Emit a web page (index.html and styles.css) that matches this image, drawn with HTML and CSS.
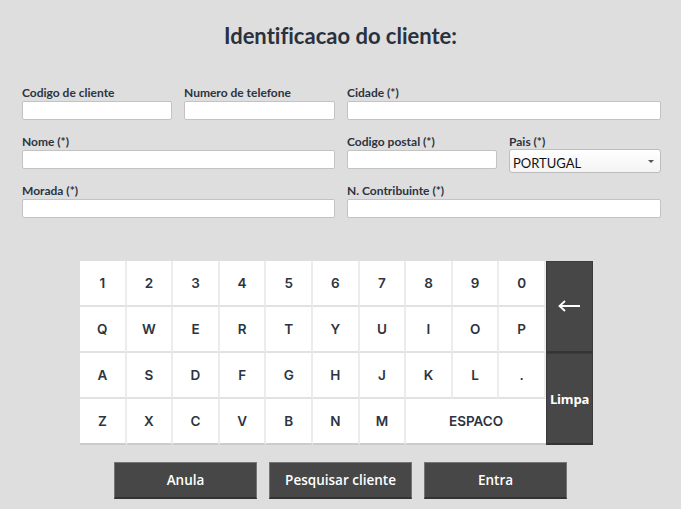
FILE: index.html
```html
<!DOCTYPE html>
<html lang="pt">
<head>
<meta charset="utf-8">
<title>Identificacao do cliente</title>
<link rel="stylesheet" href="styles.css">
</head>
<body>
<div class="page">
  <h1 class="title">Identificacao do cliente:</h1>
  <form class="form">
    <div class="field"><label>Codigo de cliente</label><input type="text"></div>
    <div class="field"><label>Numero de telefone</label><input type="text"></div>
    <div class="field span2"><label>Cidade (*)</label><input type="text"></div>

    <div class="field span2"><label>Nome (*)</label><input type="text"></div>
    <div class="field"><label>Codigo postal (*)</label><input type="text"></div>
    <div class="field"><label>Pais (*)</label>
      <div class="select"><span>PORTUGAL</span><span class="caret"></span></div>
    </div>

    <div class="field span2"><label>Morada (*)</label><input type="text"></div>
    <div class="field span2"><label>N. Contribuinte (*)</label><input type="text"></div>
  </form>

  <div class="keyboard">
    <div class="key">1</div><div class="key">2</div><div class="key">3</div><div class="key">4</div><div class="key">5</div>
    <div class="key">6</div><div class="key">7</div><div class="key">8</div><div class="key">9</div><div class="key">0</div>
    <div class="key dark back" aria-label="Apagar"><svg width="24" height="12" viewBox="0 0 24 12"><path d="M23 6H2.5M8 1L2.5 6L8 11" fill="none" stroke="#fff" stroke-width="1.8"/></svg></div>
    <div class="key">Q</div><div class="key">W</div><div class="key">E</div><div class="key">R</div><div class="key">T</div>
    <div class="key">Y</div><div class="key">U</div><div class="key">I</div><div class="key">O</div><div class="key">P</div>
    <div class="key">A</div><div class="key">S</div><div class="key">D</div><div class="key">F</div><div class="key">G</div>
    <div class="key">H</div><div class="key">J</div><div class="key">K</div><div class="key">L</div><div class="key">.</div>
    <div class="key dark clear">Limpa</div>
    <div class="key last">Z</div><div class="key last">X</div><div class="key last">C</div><div class="key last">V</div><div class="key last">B</div>
    <div class="key last">N</div><div class="key last">M</div><div class="key last space">ESPACO</div>
  </div>

  <div class="actions">
    <button class="btn" type="button">Anula</button>
    <button class="btn" type="button">Pesquisar cliente</button>
    <button class="btn" type="button">Entra</button>
  </div>
</div>
</body>
</html>
```

FILE: styles.css
```css
html, body {
  margin: 0;
  padding: 0;
  background: #dedede;
}
body {
  width: 681px;
  height: 509px;
  overflow: hidden;
  font-family: Lato, "Liberation Sans", sans-serif;
  font-variant-ligatures: none;
  color: #2c3441;
}
.page {
  padding-top: 23px;
}
.title {
  margin: 0;
  text-align: center;
  font-size: 22px;
  line-height: 26px;
  font-weight: 700;
  color: #2a313e;
}
.form {
  margin: 36px 0 0 22px;
  display: grid;
  grid-template-columns: 150px 151px 150px 152px;
  column-gap: 12px;
  row-gap: 14px;
  width: 639px;
}
.field {
  display: flex;
  flex-direction: column;
}
.span2 {
  grid-column: span 2;
}
.field label {
  font-size: 12px;
  line-height: 16px;
  font-weight: 700;
  color: #2c3441;
  white-space: nowrap;
}
.field input {
  box-sizing: border-box;
  height: 19px;
  margin: 0;
  padding: 0 3px;
  border: 1px solid #c3c3c3;
  border-radius: 2px;
  background: #fff;
  outline: none;
}
.select {
  box-sizing: border-box;
  height: 24px;
  margin: -1px 0 -6px 0;
  border: 1px solid #bdbdbd;
  border-radius: 3px;
  background: linear-gradient(#ffffff, #f4f4f4);
  display: flex;
  align-items: center;
  justify-content: space-between;
  padding: 3px 6px 0 3px;
  font-size: 13px;
  color: #111;
}
.caret {
  width: 0;
  height: 0;
  border-left: 3px solid transparent;
  border-right: 3px solid transparent;
  border-top: 3px solid #555;
  margin-top: -3px;
}
.keyboard {
  margin: 43px 0 0 80px;
  width: 513px;
  display: grid;
  grid-template-columns: repeat(10, 1fr) 47px;
  grid-template-rows: repeat(4, 46px);
}
.key {
  box-sizing: border-box;
  background: #fff;
  border-right: 2px solid #ececec;
  border-bottom: 2px solid #e2e2e2;
  display: flex;
  align-items: center;
  justify-content: center;
  font-family: Inter, "Liberation Sans", sans-serif;
  font-weight: 600;
  font-size: 13.5px;
  color: #2c3441;
}
.key.last {
  border-bottom: 2px solid #cbcbcb;
}
.key.space {
  grid-column: span 3;
  border-right: none;
}
.key.dark {
  grid-column: 11;
  grid-row: span 2;
  background: #474747;
  border: 1px solid #3a3a3a;
  border-bottom: 2px solid #353535;
  color: #fff;
  font-family: "Open Sans", "Liberation Sans", sans-serif;
}
.back {
  padding-bottom: 2px;
}
.clear {
  font-size: 13px;
  font-weight: 700;
  letter-spacing: -0.2px;
}
.actions {
  margin-top: 17px;
  display: flex;
  justify-content: center;
  gap: 12px;
}
.btn {
  box-sizing: border-box;
  width: 143px;
  height: 37px;
  margin: 0;
  padding: 0;
  background: #474747;
  border: 1px solid #757575;
  border-bottom: 2px solid #333;
  color: #fff;
  font-family: "Open Sans", "Liberation Sans", sans-serif;
  font-weight: 600;
  font-size: 13.5px;
}
```
